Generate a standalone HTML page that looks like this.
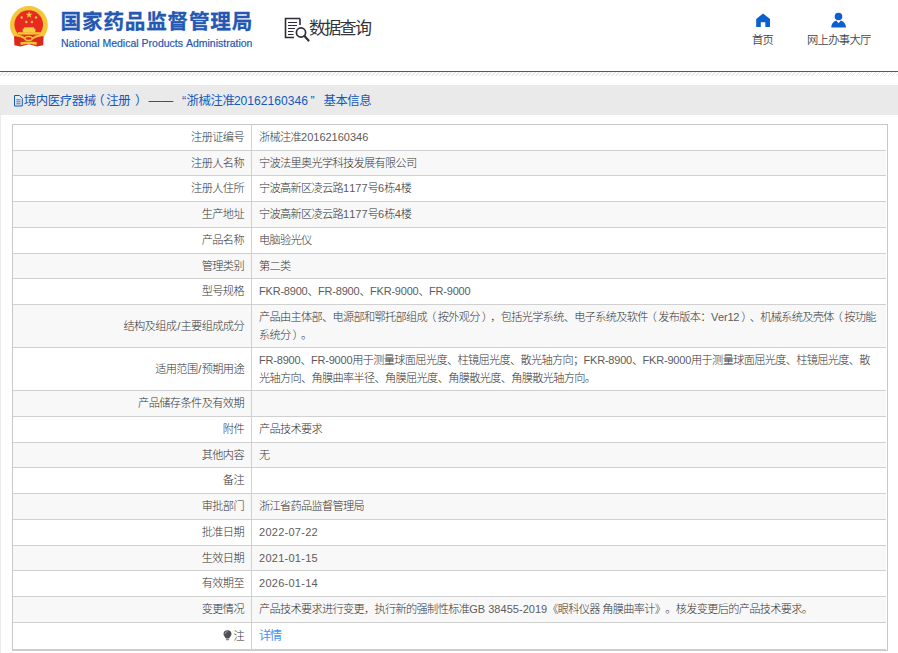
<!DOCTYPE html>
<html lang="zh-CN">
<head>
<meta charset="utf-8">
<title>境内医疗器械（注册）基本信息</title>
<style>
html,body{margin:0;padding:0;}
body{width:898px;height:653px;overflow:hidden;position:relative;background:#eaeaea;font-family:"Liberation Sans","Noto Sans CJK SC",sans-serif;color:#333;text-spacing-trim:space-all;font-kerning:none;font-weight:300;}
#hdr{position:absolute;left:0;top:0;width:898px;height:85px;background:#fff;}
#blue{position:absolute;left:0;top:71px;width:898px;height:1px;background:#1867c0;}
#hatch{position:absolute;left:0;top:72px;width:898px;height:4px;background:repeating-linear-gradient(135deg,#fff 0,#fff 1.8px,#e8e8e8 1.8px,#e8e8e8 2.83px);}
#logo{position:absolute;left:4px;top:2px;}
#cn{position:absolute;left:60.6px;top:6px;font-size:20.6px;font-weight:bold;color:#2458b2;letter-spacing:.8px;-webkit-text-stroke:.3px #2458b2;line-height:32px;white-space:nowrap;}
#en{position:absolute;left:61px;top:36px;font-weight:400;font-size:10.5px;color:#2458b2;-webkit-text-stroke:.2px #2458b2;line-height:14px;white-space:nowrap;}
#q{position:absolute;left:309px;top:17px;font-weight:400;font-size:17px;line-height:24px;color:#33333c;letter-spacing:-1.7px;white-space:nowrap;}
#qi{position:absolute;left:284px;top:17px;}
.nav{position:absolute;top:32px;font-weight:350;color:#3a3a3a;font-size:11.3px;line-height:16px;color:#444;white-space:nowrap;letter-spacing:-0.7px;}
#title{position:absolute;left:23.8px;top:92px;font-size:12.4px;line-height:18px;color:#1259bd;white-space:nowrap;letter-spacing:-0.4px;font-weight:400;}
#title span{position:absolute;top:0;}
#title .te{letter-spacing:0;font-size:12.1px;}
#ti{position:absolute;left:14px;top:95.4px;}
#panel{position:absolute;left:1px;top:115px;width:897px;height:538px;background:#fff;}
#tb{position:absolute;left:12px;top:124px;width:874px;height:525px;border:1px solid #c9c9c9;background:#fff;}
.r{position:absolute;left:13px;width:873px;border-bottom:1px solid #d0d0d0;background:#fff;font-size:11.2px;}
.r.alt{background:#f8f8f8;}
.l{position:absolute;left:0;top:0;width:231px;height:100%;text-align:right;padding-right:7px;border-right:1px solid #d0d0d0;white-space:nowrap;letter-spacing:-0.6px;color:#333;}
.v{position:absolute;left:246px;top:0;right:0;height:100%;white-space:nowrap;letter-spacing:-0.68px;color:#333;}
.two .v{line-height:17.5px;padding-top:4px;}
.v a{color:#4292f4;font-size:12px;font-weight:400;letter-spacing:-.9px;}
.e{letter-spacing:0;font-size:11px;color:#5c5c5c;}
.ea{letter-spacing:-0.2px;}
.eg{letter-spacing:.03px;}
.ed{letter-spacing:.27px;}
.pl{position:relative;left:-2px;}
.pr{position:relative;left:2px;}
.sl{padding:0 .8px;color:#555;}
.bulb{vertical-align:-1px;margin-right:1px;}
</style>
</head>
<body>
<div id="hdr">
<svg id="logo" width="52" height="52" viewBox="0 0 52 52">
<circle cx="24.9" cy="22.9" r="18.9" fill="#f6c636"/>
<circle cx="24.7" cy="22.6" r="14.3" fill="#e92a20"/>
<path d="M10 34.2 L39.6 34.2 L39.2 43.2 L33 44.6 L24.8 42.2 L16.6 44.6 L10.4 43.2 Z" fill="#dc271c"/>
<path d="M12.5 33.2 Q18 34.2 21 36.4 M37 33.2 Q31.500 34.200 28.500 36.400" fill="none" stroke="#f3bf35" stroke-width="2"/>
<ellipse cx="24.6" cy="36.5" rx="3.7" ry="2" fill="none" stroke="#f3c03a" stroke-width="1.5"/>
<path d="M16.2 40.200 Q24.6 38.6 33 40.200 L32.4 43 Q24.6 40.8 16.800 43 Z" fill="#f3c03a"/>
<rect x="13.9" y="30.2" width="22.7" height="2.4" fill="#f6c636"/>
<rect x="18.7" y="26.8" width="12.7" height="3.6" fill="#f7cf45"/>
<rect x="19.900" y="25.300" width="10.2" height="1.7" fill="#f7cf45"/>
<path d="M0 -3.6 L0.85 -1.15 L3.42 -1.11 L1.37 0.44 L2.12 2.91 L0 1.44 L-2.12 2.91 L-1.37 0.44 L-3.42 -1.11 L-0.85 -1.15 Z" fill="#f7d143" transform="translate(25.1 12.9)"/>
<g fill="#f3c63c"><circle cx="17.7" cy="15.5" r="1.25"/><circle cx="32" cy="15.5" r="1.25"/><circle cx="22.3" cy="19.9" r="1.25"/><circle cx="27.9" cy="19.9" r="1.25"/></g>
</svg>
<div id="cn">国家药品监督管理局</div>
<div id="en">National Medical Products Administration</div>
<svg id="qi" width="27" height="26" viewBox="0 0 27 26" fill="none" stroke="#2e2e38">
<path d="M16 1.5 H1.5 V20.5 H10" stroke-width="1.6"/>
<path d="M16 1.5 V8" stroke-width="1.6"/>
<path d="M4 5.5 H13 M4 8.5 H13 M4 11.5 H11 M4 14.5 H9.5 M4 17.5 H9.5" stroke-width="1.1"/>
<circle cx="17" cy="15.5" r="4.6" stroke-width="1.7" fill="#fff"/>
<path d="M20.5 19 L24.5 23.5" stroke-width="2.2" stroke-linecap="round"/>
</svg>
<div id="q">数据查询</div>
<svg style="position:absolute;left:755px;top:12px" width="16" height="16" viewBox="0 0 16 16"><path d="M8 1.4 L15 7 V15 H10.3 V10.3 H5.8 V15 H1.2 V7 Z" fill="#0c5fce"/></svg>
<div class="nav" style="left:752px">首页</div>
<svg style="position:absolute;left:830px;top:11px" width="18" height="18" viewBox="0 0 18 18"><circle cx="8.5" cy="5.5" r="3.8" fill="#0c5fce"/><path d="M1.2 16.6 Q1.6 11 6.2 9.6 L8.5 12.3 L10.8 9.6 Q15.6 11 16 16.6 Z" fill="#0c5fce"/></svg>
<div class="nav" style="left:807px">网上办事大厅</div>
<div id="blue"></div>
<div id="hatch"></div>
</div>
<svg id="ti" width="9" height="12" viewBox="0 0 9 12" fill="none" stroke="#1259bd" stroke-width="1"><path d="M.5 .5 H5.5 L8.3 3.3 V11 H.5 Z"/><path d="M2.3 4.8 H6.5 M2.3 6.8 H6.5 M2.3 8.8 H6.5" stroke-width=".8"/></svg>
<div id="title"><span style="left:0">境内医疗器械</span><span style="left:68.5px">（</span><span style="left:82.4px">注册</span><span style="left:111.3px">）</span><span style="left:124.6px;letter-spacing:0">——</span><span style="left:158.3px">“</span><span style="left:162.7px">浙械注准</span><span class="te" style="left:210.1px">20162160346</span><span style="left:286.7px">”</span><span style="left:299.6px">基本信息</span></div>
<div id="panel"></div>
<div id="tb"></div>
<div class="r" style="top:125px;height:25px"><div class="l" style="line-height:25px">注册证编号</div><div class="v" id="v0" style=line-height:25px>浙械注准<span class="e">20162160346</span></div></div>
<div class="r alt" style="top:151px;height:24px"><div class="l" style="line-height:24px">注册人名称</div><div class="v" id="v1" style=line-height:24px>宁波法里奥光学科技发展有限公司</div></div>
<div class="r" style="top:176px;height:25px"><div class="l" style="line-height:25px">注册人住所</div><div class="v" id="v2" style=line-height:25px>宁波高新区凌云路<span class="e">1177</span>号<span class="e">6</span>栋<span class="e">4</span>楼</div></div>
<div class="r alt" style="top:202px;height:25px"><div class="l" style="line-height:25px">生产地址</div><div class="v" id="v3" style=line-height:25px>宁波高新区凌云路<span class="e">1177</span>号<span class="e">6</span>栋<span class="e">4</span>楼</div></div>
<div class="r" style="top:228px;height:25px"><div class="l" style="line-height:25px">产品名称</div><div class="v" id="v4" style=line-height:25px>电脑验光仪</div></div>
<div class="r alt" style="top:254px;height:24px"><div class="l" style="line-height:24px">管理类别</div><div class="v" id="v5" style=line-height:24px>第二类</div></div>
<div class="r" style="top:279px;height:25px"><div class="l" style="line-height:25px">型号规格</div><div class="v" id="v6" style=line-height:25px><span class="e ea">FKR-8900</span>、<span class="e ea">FR-8900</span>、<span class="e ea">FKR-9000</span>、<span class="e ea">FR-9000</span></div></div>
<div class="r alt two" style="top:305px;height:42px"><div class="l" style="line-height:42px">结构及组成<span class=sl>/</span>主要组成成分</div><div class="v" id="v7" >产品由主体部、电源部和鄂托部组成<span class="pl">（</span>按外观分<span class="pr">）</span>，包括光学系统、电子系统及软件<span class="pl">（</span>发布版本：<span class="e ea">Ver12</span><span class="pr">）</span>、机械系统及壳体<span class="pl">（</span>按功能<br>系统分<span class="pr">）</span>。</div></div>
<div class="r two" style="top:348px;height:42px"><div class="l" style="line-height:42px">适用范围<span class=sl>/</span>预期用途</div><div class="v" id="v8" ><span class="e ea">FR-8900</span>、<span class="e ea">FR-9000</span>用于测量球面屈光度、柱镜屈光度、散光轴方向；<span class="e ea">FKR-8900</span>、<span class="e ea">FKR-9000</span>用于测量球面屈光度、柱镜屈光度、散<br>光轴方向、角膜曲率半径、角膜屈光度、角膜散光度、角膜散光轴方向。</div></div>
<div class="r alt" style="top:391px;height:25px"><div class="l" style="line-height:25px">产品储存条件及有效期</div><div class="v" id="v9" style=line-height:25px></div></div>
<div class="r" style="top:417px;height:25px"><div class="l" style="line-height:25px">附件</div><div class="v" id="v10" style=line-height:25px>产品技术要求</div></div>
<div class="r alt" style="top:443px;height:24px"><div class="l" style="line-height:24px">其他内容</div><div class="v" id="v11" style=line-height:24px>无</div></div>
<div class="r" style="top:468px;height:25px"><div class="l" style="line-height:25px">备注</div><div class="v" id="v12" style=line-height:25px></div></div>
<div class="r alt" style="top:494px;height:25px"><div class="l" style="line-height:25px">审批部门</div><div class="v" id="v13" style=line-height:25px>浙江省药品监督管理局</div></div>
<div class="r" style="top:520px;height:25px"><div class="l" style="line-height:25px">批准日期</div><div class="v" id="v14" style=line-height:25px><span class="e ed">2022-07-22</span></div></div>
<div class="r alt" style="top:546px;height:24px"><div class="l" style="line-height:24px">生效日期</div><div class="v" id="v15" style=line-height:24px><span class="e ed">2021-01-15</span></div></div>
<div class="r" style="top:571px;height:25px"><div class="l" style="line-height:25px">有效期至</div><div class="v" id="v16" style=line-height:25px><span class="e ed">2026-01-14</span></div></div>
<div class="r alt" style="top:597px;height:25px"><div class="l" style="line-height:25px">变更情况</div><div class="v" id="v17" style=line-height:25px>产品技术要求进行变更，执行新的强制性标准<span class="e eg">GB 38455-2019</span>《眼科仪器 角膜曲率计》。核发变更后的产品技术要求。</div></div>
<div class="r" style="top:623px;height:26px"><div class="l" style="line-height:26px"><svg class="bulb" width="9" height="11" viewBox="0 0 9 11"><path d="M4.500 .3 C7 .3 8.500 2 8.500 4 C8.500 6 6.900 6.800 6.300 8.300 H2.700 C2.100 6.800 .5 6 .5 4 C.5 2 2 .3 4.500 .3 Z" fill="#4f4f54"/><rect x="2.900" y="8.300" width="3.200" height="2" rx=".6" fill="#8a8a8a"/><path d="M2 4.300 C2 2.800 3 1.800 4.400 1.700" fill="none" stroke="#c9c9c9" stroke-width=".8"/></svg>注</div><div class="v" id="v18" style=line-height:26px><a>详情</a></div></div>
</body>
</html>
